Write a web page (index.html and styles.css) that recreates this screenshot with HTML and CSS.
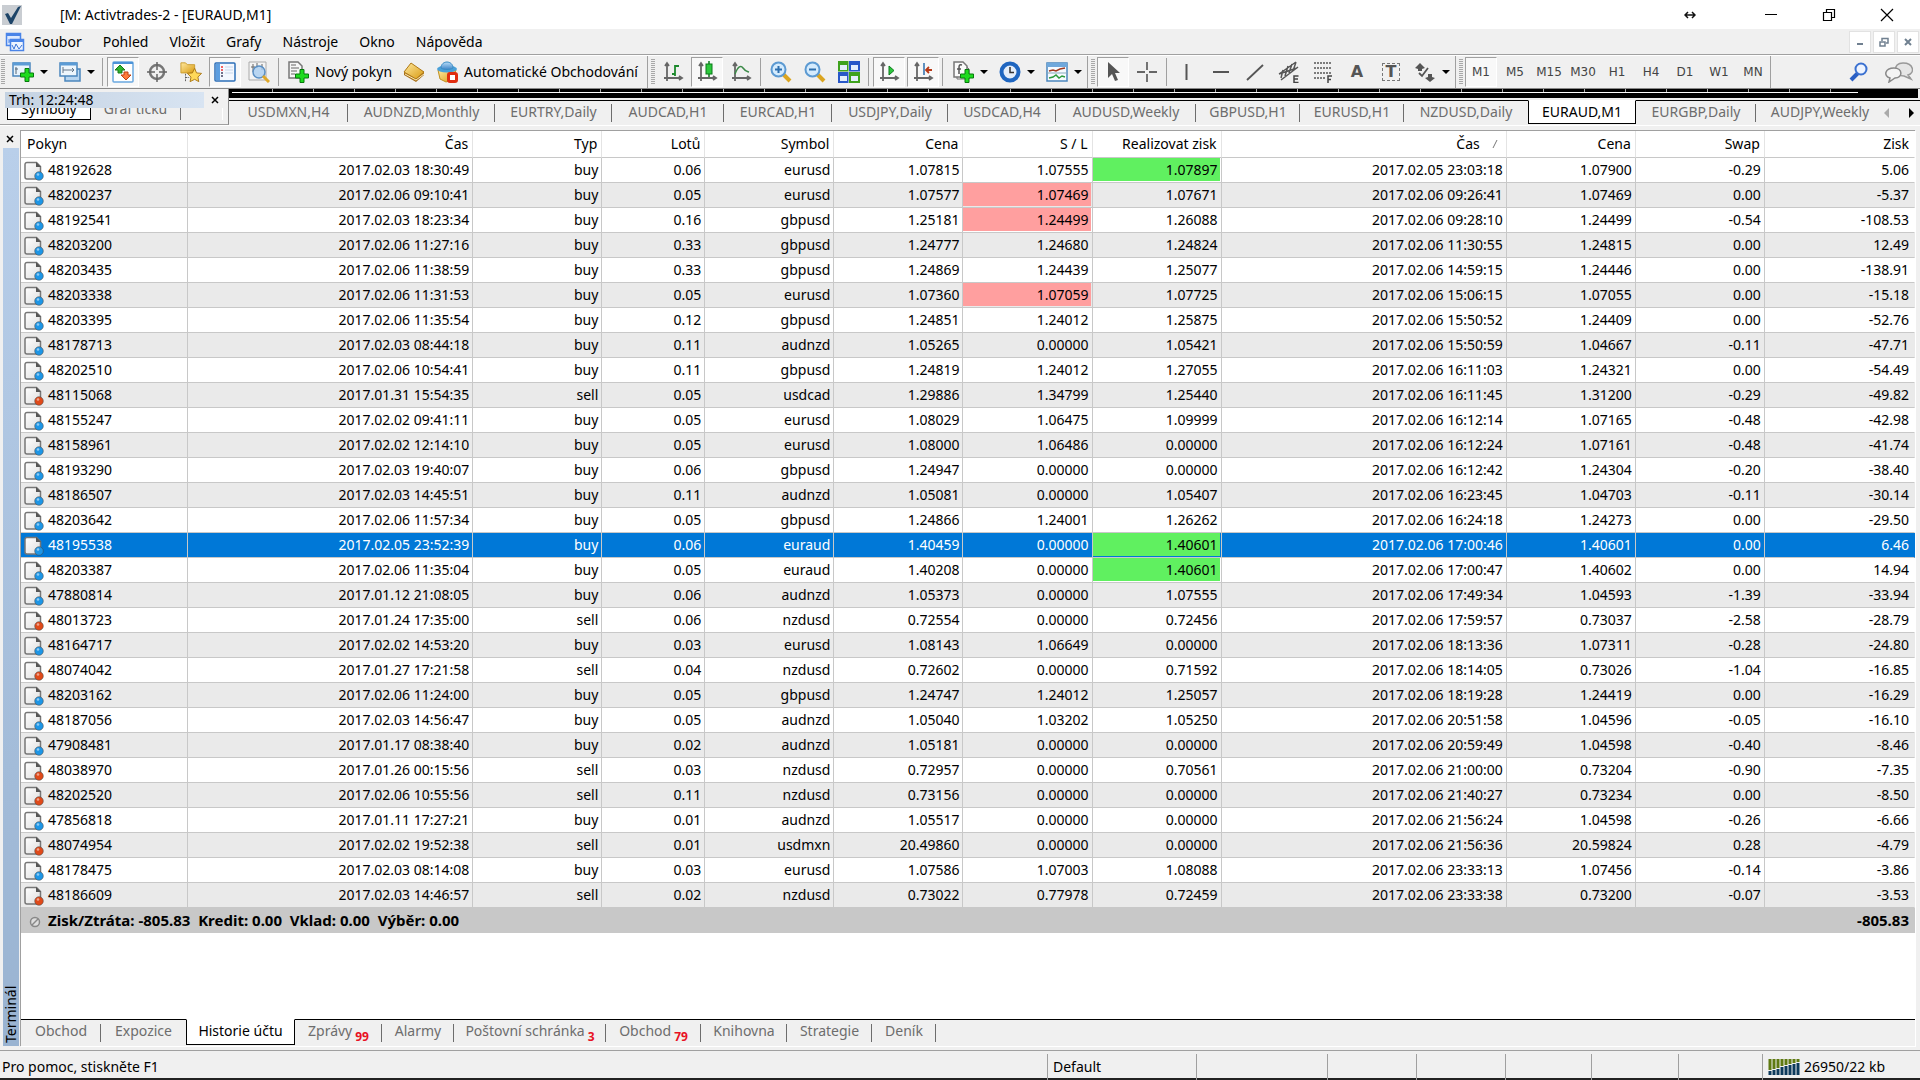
FILE: index.html
```html
<!DOCTYPE html>
<html lang="cs">
<head>
<meta charset="utf-8">
<title>Activtrades-2 - [EURAUD,M1]</title>
<link rel="stylesheet" href="styles.css">
</head>
<body>
<svg class="defs" aria-hidden="true">
  <defs>
    <linearGradient id="paper" x2="1" y2="1"><stop offset="0" stop-color="#fff"/><stop offset="1" stop-color="#ddd"/></linearGradient>
    <linearGradient id="gold" x2="1" y2="1"><stop offset="0" stop-color="#ffe9a0"/><stop offset="1" stop-color="#d89a10"/></linearGradient>
    <linearGradient id="sky" x2="0" y2="1"><stop offset="0" stop-color="#b8dcf8"/><stop offset="1" stop-color="#3f86c8"/></linearGradient>
    <symbol id="doc" viewBox="0 0 20 20">
      <path d="M3 1.500h9.500l4 4V17a1 1 0 0 1-1 1H3a2 2 0 0 1-2-2V3.500a2 2 0 0 1 2-2z" fill="url(#paper)" stroke="#777" stroke-width="1.500"/>
      <path d="M12 1v5h5z" fill="#555"/>
      <circle cx="15" cy="15" r="4.300" fill="currentColor" stroke="#444" stroke-opacity=".5"/>
      <circle cx="14" cy="13.500" r="1.300" fill="#fff" opacity=".5"/>
    </symbol>
    <symbol id="plus" viewBox="0 0 14 14"><path d="M5 .5h4V5h4.500v4H9v4.500H5V9H.5V5H5z" fill="#1edb1e" stroke="#067a0c"/></symbol>
    <symbol id="axes" viewBox="0 0 22 22"><path d="M5 3v17M2 17h17M3 5l2-3 2 3M17 15l3 2-3 2" fill="none" stroke="#666" stroke-width="1.800"/></symbol>
  </defs>
</svg>

<header class="titlebar">
  <svg class="app-icon" viewBox="0 0 20 20"><rect width="20" height="20" fill="#c9cdd2"/><path d="M3 9l3-1 3 5 7-11 3-1-9 18H8z" fill="#1d4468"/></svg>
  <h1 class="title">[M: Activtrades-2 - [EURAUD,M1]</h1>
  <svg class="resize-mark" viewBox="0 0 12 8"><path d="M2 4h8M4 1L1 4l3 3M8 1l3 3-3 3" fill="none" stroke="#111" stroke-width="1.500"/></svg>
  <button class="win-btn" aria-label="Minimalizovat"><svg viewBox="0 0 14 14"><path d="M1 6.500h12" stroke="#000"/></svg></button>
  <button class="win-btn" aria-label="Obnovit"><svg viewBox="0 0 14 14"><path d="M1.500 4.500h8v8h-8zM4.500 4V1.500h8v8H10" fill="none" stroke="#000" stroke-width="1.200"/></svg></button>
  <button class="win-btn" aria-label="Zavřít"><svg viewBox="0 0 14 14"><path d="M1 1l12 12M13 1L1 13" stroke="#000" stroke-width="1.200"/></svg></button>
</header>

<nav class="menubar">
  <svg class="menu-icon" viewBox="0 0 20 20"><path d="M1.500 1.500h14v12h-14z" fill="#dce9ff" stroke="#4a84e8" stroke-width="1.500"/><path d="M4 7v4M4 9h3" stroke="#4a84e8"/><path d="M5.500 7.500h13v11h-13z" fill="#eef4ff" stroke="#4a84e8" stroke-width="1.500"/><path d="M1 3h15M5 9h14" stroke="#4a84e8" stroke-width="2"/><path d="M7 13l2 4 2-5 3 5 3-4" fill="none" stroke="#3b74d8"/></svg>
  <button>Soubor</button><button>Pohled</button><button>Vložit</button><button>Grafy</button><button>Nástroje</button><button>Okno</button><button>Nápověda</button>
  <div class="child-controls">
    <button aria-label="Minimalizovat graf"><svg viewBox="0 0 10 10"><path d="M2 7h6" stroke="#708090" stroke-width="2"/></svg></button>
    <button aria-label="Obnovit graf"><svg viewBox="0 0 10 10"><path d="M1 5h5v4H1zM3 4V1.500h6V6H7" fill="none" stroke="#708090" stroke-width="1.500"/></svg></button>
    <button aria-label="Zavřít graf"><svg viewBox="0 0 10 10"><path d="M2 2l6 6M8 2L2 8" stroke="#708090" stroke-width="2"/></svg></button>
  </div>
</nav>

<div class="toolbar">
  <div class="group">
    <i class="grip"></i>
    <button class="tool drop" aria-label="Nový graf"><svg viewBox="0 0 22 22"><rect x="1" y="2" width="17" height="13" fill="#e8f3fc" stroke="#4b86bd" stroke-width="1.500"/><path d="M1 3h17" stroke="#5b9bd5" stroke-width="3"/><path d="M4 6v7M3 8h3" stroke="#567"/><use href="#plus" x="8" y="7" width="14" height="14"/></svg></button>
    <button class="tool drop" aria-label="Profily"><svg viewBox="0 0 22 22"><rect x="6" y="8" width="15" height="12" fill="#b7d5f0" stroke="#4b86bd" stroke-width="1.500"/><rect x="1" y="2" width="17" height="13" fill="#eef6fc" stroke="#4b86bd" stroke-width="1.500"/><path d="M1 3h17" stroke="#5b9bd5" stroke-width="3"/><path d="M4 6v6M4 9h11M13 7l2 2-2 2" fill="none" stroke="#678"/></svg></button>
    <i class="sep"></i>
    <button class="tool on" aria-label="Tržní hlídka"><svg viewBox="0 0 22 22"><rect x="1" y="1" width="20" height="20" rx="1" fill="#fff" stroke="#6aa8e0" stroke-width="1.500"/><path d="M1 2h20" stroke="#4b93d8" stroke-width="2"/><path d="M8 4l5 5h-3v3H6V9H3z" fill="#2fb52f" stroke="#187818"/><path d="M14 19l-5-5h3v-3h4v3h3z" fill="#ff7a3a" stroke="#c04010"/></svg></button>
    <button class="tool" aria-label="Datové okno"><svg viewBox="0 0 22 22"><circle cx="11" cy="11" r="7" fill="none" stroke="#777" stroke-width="2.500"/><path d="M11 1v8M11 13v8M1 11h8M13 11h8" stroke="#666" stroke-width="1.500"/></svg></button>
    <button class="tool" aria-label="Navigátor"><svg viewBox="0 0 24 22"><path d="M1 1h5l2 2h8v9H1z" fill="url(#gold)" stroke="#c89a2b"/><path d="M6 13v8M6 17h4" stroke="#555" stroke-dasharray="2 1"/><path d="M16 7l2 5 5.500.5-4 4 1 5-4.500-2.500-5 2.500 1-5-4-4 5.500-.5z" fill="#ffd95a" stroke="#a87410"/></svg></button>
    <button class="tool on" aria-label="Terminál"><svg viewBox="0 0 22 22"><rect x="1" y="2" width="20" height="18" rx="1" fill="#f4f8ff" stroke="#2d6fb8" stroke-width="1.500"/><path d="M4 3v16" stroke="#5c9ee0" stroke-width="4"/><path d="M7 6h2M7 9h2" stroke="#e33" stroke-width="1.500"/><path d="M7 12h2M7 15h2" stroke="#446" stroke-width="1.500"/><path d="M11 6h8M11 9h8M11 12h8" stroke="#c9d8ea"/></svg></button>
    <button class="tool" aria-label="Tester strategií"><svg viewBox="0 0 22 22"><path d="M1 1h17v18H1z" fill="#f4f4f4" stroke="#aaa"/><path d="M5 3v8M9 2v5M14 3v6M3 6h4" stroke="#666"/><circle cx="11" cy="11" r="6" fill="#a9cdf0" fill-opacity=".8" stroke="#5a8fc4" stroke-width="1.500"/><path d="M15 15l6 6" stroke="#e0a828" stroke-width="3"/></svg></button>
    <i class="sep"></i>
    <button class="tool text"><svg viewBox="0 0 22 22"><path d="M2 1h9l4 4v12H2z" fill="#f6f6f6" stroke="#777" stroke-width="1.500"/><path d="M4 4h5M4 7h8M4 10h6M4 13h4" stroke="#666"/><use href="#plus" x="8" y="8" width="14" height="14"/></svg>Nový pokyn</button>
    <button class="tool" aria-label="MetaEditor"><svg viewBox="0 0 22 22"><path d="M8 3l13 8v3l-8 7L1 14v-3z" fill="#a8701a"/><path d="M8 2l13 9-8 7-12-7z" fill="url(#gold)" stroke="#b07a18"/><path d="M2 13l11 6 8-6" fill="none" stroke="#ffeeb8"/></svg></button>
    <button class="tool text"><svg viewBox="0 0 22 22"><path d="M2 9h18l-4 10-6 2-6-3z" fill="url(#gold)" stroke="#c09020"/><ellipse cx="11" cy="8" rx="10" ry="3.500" fill="#4aa0d8"/><path d="M5 7c0-8 12-8 12 0-3 2-9 2-12 0z" fill="url(#sky)" stroke="#3a8cc4"/><rect x="11" y="11" width="11" height="11" rx="3" fill="#e02d10"/><rect x="14" y="14" width="5" height="5" fill="#fff"/></svg>Automatické Obchodování</button>
  </div>
  <div class="group">
    <i class="grip"></i>
    <button class="tool" aria-label="Sloupcový graf"><svg viewBox="0 0 22 22"><use href="#axes"/><path d="M13 15V4M13 5h4M10 13h3" fill="none" stroke="#1d8a2d" stroke-width="1.800"/></svg></button>
    <button class="tool on" aria-label="Svíčkový graf"><svg viewBox="0 0 22 22"><use href="#axes"/><path d="M13 0v16" stroke="#0b7a1b" stroke-width="1.500"/><rect x="10" y="3" width="6" height="10" fill="#2cc83c" stroke="#0b7a1b"/></svg></button>
    <button class="tool" aria-label="Čárový graf"><svg viewBox="0 0 22 22"><use href="#axes"/><path d="M5 13c3-8 6-9 8-6s3 3 6 4" fill="none" stroke="#3c8a48" stroke-width="1.500"/></svg></button>
    <i class="sep"></i>
    <button class="tool" aria-label="Přiblížit"><svg viewBox="0 0 22 22"><path d="M13 13l7 7" stroke="#dba520" stroke-width="4"/><circle cx="8.500" cy="8.500" r="7" fill="#d4ebfd" stroke="#5c9ad2" stroke-width="2"/><path d="M8.500 5v7M5 8.500h7" stroke="#2d6fae" stroke-width="2"/></svg></button>
    <button class="tool" aria-label="Oddálit"><svg viewBox="0 0 22 22"><path d="M13 13l7 7" stroke="#dba520" stroke-width="4"/><circle cx="8.500" cy="8.500" r="7" fill="#d4ebfd" stroke="#5c9ad2" stroke-width="2"/><path d="M5 8.500h7" stroke="#2d6fae" stroke-width="2"/></svg></button>
    <button class="tool" aria-label="Uspořádat okna"><svg viewBox="0 0 22 22"><path d="M0 0h10.500v10.500H0zM11 11h11v11H11z" fill="#3fa21d"/><path d="M11 0h11v10.500H11zM0 11h10.500v11H0z" fill="#2857c8"/><path d="M2 4h7v5H2zM13 4h7v5h-7zM2 15h7v5H2zM13 15h7v5h-7z" fill="#e4eefc"/></svg></button>
    <i class="sep"></i>
    <button class="tool on" aria-label="Automatický posun"><svg viewBox="0 0 22 22"><use href="#axes"/><path d="M11 5l5 4.500-5 4.500z" fill="#2cc83c" stroke="#0b7a1b"/></svg></button>
    <button class="tool on" aria-label="Posun grafu"><svg viewBox="0 0 22 22"><use href="#axes"/><path d="M12 2v12" stroke="#2d6fae" stroke-width="1.500"/><path d="M14 9h6M17 6l-3 3 3 3" fill="none" stroke="#b83a18" stroke-width="1.800"/></svg></button>
    <i class="sep"></i>
    <button class="tool drop" aria-label="Indikátory"><svg viewBox="0 0 22 22"><path d="M5 4h8l4 4v10H5z" fill="#eee" stroke="#777"/><path d="M2 1h9l4 4v11H2z" fill="#fafafa" stroke="#777" stroke-width="1.500"/><path d="M10 4c-3-1-3 1-3 3v6M5 8h4" fill="none" stroke="#555" stroke-width="1.500"/><use href="#plus" x="8" y="8" width="14" height="14"/></svg></button>
    <button class="tool drop" aria-label="Období"><svg viewBox="0 0 22 22"><circle cx="11" cy="11" r="8.500" fill="#e4eefa" stroke="#1f66c0" stroke-width="4"/><path d="M11 6v5.500h4" fill="none" stroke="#333" stroke-width="1.500"/></svg></button>
    <button class="tool drop" aria-label="Šablony"><svg viewBox="0 0 22 22"><rect x="1" y="2" width="20" height="18" fill="#f6faff" stroke="#4b86bd" stroke-width="1.500"/><path d="M1 4h20" stroke="#6fa8dc" stroke-width="4"/><path d="M3 10l4-1 3 1 4-2 5-1" fill="none" stroke="#a03a20" stroke-width="1.500"/><path d="M3 17l4-1 3-2 3 3 3-2 3 1" fill="none" stroke="#2c9a3c" stroke-width="1.500"/><path d="M1 12h20" stroke="#8ab"/></svg></button>
  </div>
  <div class="group">
    <i class="grip"></i>
    <button class="tool on" aria-label="Kurzor"><svg viewBox="0 0 22 22"><path d="M6 1v16l4-4 3 7 3-1-3-7h5z" fill="#555"/></svg></button>
    <button class="tool" aria-label="Nitkový kříž"><svg viewBox="0 0 22 22"><path d="M11 1v8M11 13v8M1 11h8M13 11h8" stroke="#666" stroke-width="1.800"/></svg></button>
    <i class="sep"></i>
    <button class="tool" aria-label="Svislá čára"><svg viewBox="0 0 22 22"><path d="M10.500 3v16" stroke="#555" stroke-width="2"/></svg></button>
    <button class="tool" aria-label="Vodorovná čára"><svg viewBox="0 0 22 22"><path d="M3 11h16" stroke="#555" stroke-width="2"/></svg></button>
    <button class="tool" aria-label="Trendová čára"><svg viewBox="0 0 22 22"><path d="M3 19L19 4" stroke="#555" stroke-width="1.800"/></svg></button>
    <button class="tool" aria-label="Kanál"><svg viewBox="0 0 22 22"><path d="M1 13L18 1M3 19L20 6M5 9l-2 8M10 5L7 15M14 3l-3 9M18 1l-3 9M1 13l18-6" stroke="#555" stroke-width="1.500"/><path d="M20.500 15H16v6.500h4.500M16 18h4" fill="none" stroke="#444" stroke-width="1.500"/></svg></button>
    <button class="tool" aria-label="Fibonacci"><svg viewBox="0 0 22 22"><path d="M2 2h18M2 7h18M2 12h18M2 17h11" stroke="#555" stroke-width="1.500" stroke-dasharray="2 1"/><path d="M20 15h-4v7M16 18.500h3" fill="none" stroke="#444" stroke-width="1.500"/></svg></button>
    <button class="tool letter">A</button>
    <button class="tool letter boxed" aria-label="Textový štítek"><span>T</span></button>
    <button class="tool drop" aria-label="Šipky"><svg viewBox="0 0 22 22"><path d="M6 2l5 5-3 1v2H4V8L1 7zM16 21l-5-4 3-1v-3h4v3l3 1z" fill="#555"/><path d="M5 12l3 3 6-8" fill="none" stroke="#555" stroke-width="1.800"/></svg></button>
  </div>
  <div class="group">
    <i class="grip"></i>
    <button class="tool period on">M1</button><button class="tool period">M5</button><button class="tool period">M15</button><button class="tool period">M30</button><button class="tool period">H1</button><button class="tool period">H4</button><button class="tool period">D1</button><button class="tool period">W1</button><button class="tool period">MN</button>
  </div>
  <div class="right-tools">
    <button class="tool" aria-label="Hledat"><svg viewBox="0 0 22 22"><path d="M10 12l-7 7" stroke="#2a5fc4" stroke-width="4"/><circle cx="13" cy="8" r="5.500" fill="#eef4ff" stroke="#3a70d0" stroke-width="2"/></svg></button>
    <button class="tool" aria-label="Chat"><svg class="chat" viewBox="0 0 28 22"><path d="M18 2c11 0 12 10 5 12l3 4-7-3c-10 0-12-13-1-13z" fill="#e6e6e6" stroke="#999" stroke-width="1.500"/><path d="M9 7c9 0 9 10 1 10l-6 4 1-4C-2 15 0 7 9 7z" fill="#f4f4f4" stroke="#888" stroke-width="1.500"/></svg></button>
  </div>
</div>

<div class="workspace">
  <section class="market">
    <header class="market-head"><h2>Trh: 12:24:48</h2><button class="close" aria-label="Zavřít Trh"><svg viewBox="0 0 8 8"><path d="M1 1l6 6M7 1L1 7" stroke="#000" stroke-width="1.500"/></svg></button></header>
    <div class="market-tabs"><button class="active">Symboly</button><button>Graf ticků</button></div>
  </section>
  <div class="charts">
    <div class="chart-edge"><i class="scale"></i></div>
    <nav class="chart-tabs">
      <a href="#">USDMXN,H4</a><a href="#">AUDNZD,Monthly</a><a href="#">EURTRY,Daily</a><a href="#">AUDCAD,H1</a><a href="#">EURCAD,H1</a><a href="#">USDJPY,Daily</a><a href="#">USDCAD,H4</a><a href="#">AUDUSD,Weekly</a><a href="#">GBPUSD,H1</a><a href="#">EURUSD,H1</a><a href="#">NZDUSD,Daily</a><a href="#" class="active">EURAUD,M1</a><a href="#">EURGBP,Daily</a><a href="#">AUDJPY,Weekly</a>
      <div class="scrollers">
        <button aria-label="Vlevo"><svg viewBox="0 0 6 10"><path d="M5 0v10L0 5z" fill="#aaa"/></svg></button>
        <button aria-label="Vpravo"><svg viewBox="0 0 6 10"><path d="M1 0v10l5-5z" fill="#000"/></svg></button>
      </div>
    </nav>
  </div>
</div>

<main class="terminal">
  <aside class="rail">
    <button class="close" aria-label="Zavřít Terminál"><svg viewBox="0 0 8 8"><path d="M1 1l6 6M7 1L1 7" stroke="#000" stroke-width="1.500"/></svg></button>
    <h2 class="rail-name">Terminál</h2>
  </aside>
  <div class="pane">
    <div class="scroll">
    <table class="orders">
      <colgroup><col class="c-id"><col class="c-time"><col class="c-std"><col class="c-lots"><col class="c-std"><col class="c-std"><col class="c-std"><col class="c-std"><col class="c-time"><col class="c-std"><col class="c-std"><col class="c-profit"></colgroup>
      <thead><tr><th>Pokyn<th>Čas<th>Typ<th>Lotů<th>Symbol<th>Cena<th>S / L<th>Realizovat zisk<th class="sorted">Čas<svg viewBox="0 0 6 8"><path d="M1 8L5 0" stroke="#777"/></svg><th>Cena<th>Swap<th>Zisk</thead>
      <tbody>
      <tr><td><svg class="buy"><use href="#doc"/></svg>48192628<td>2017.02.03 18:30:49<td>buy<td>0.06<td>eurusd<td>1.07815<td>1.07555<td class="tp">1.07897<td>2017.02.05 23:03:18<td>1.07900<td>-0.29<td>5.06
      <tr><td><svg class="buy"><use href="#doc"/></svg>48200237<td>2017.02.06 09:10:41<td>buy<td>0.05<td>eurusd<td>1.07577<td class="sl">1.07469<td>1.07671<td>2017.02.06 09:26:41<td>1.07469<td>0.00<td>-5.37
      <tr><td><svg class="buy"><use href="#doc"/></svg>48192541<td>2017.02.03 18:23:34<td>buy<td>0.16<td>gbpusd<td>1.25181<td class="sl">1.24499<td>1.26088<td>2017.02.06 09:28:10<td>1.24499<td>-0.54<td>-108.53
      <tr><td><svg class="buy"><use href="#doc"/></svg>48203200<td>2017.02.06 11:27:16<td>buy<td>0.33<td>gbpusd<td>1.24777<td>1.24680<td>1.24824<td>2017.02.06 11:30:55<td>1.24815<td>0.00<td>12.49
      <tr><td><svg class="buy"><use href="#doc"/></svg>48203435<td>2017.02.06 11:38:59<td>buy<td>0.33<td>gbpusd<td>1.24869<td>1.24439<td>1.25077<td>2017.02.06 14:59:15<td>1.24446<td>0.00<td>-138.91
      <tr><td><svg class="buy"><use href="#doc"/></svg>48203338<td>2017.02.06 11:31:53<td>buy<td>0.05<td>eurusd<td>1.07360<td class="sl">1.07059<td>1.07725<td>2017.02.06 15:06:15<td>1.07055<td>0.00<td>-15.18
      <tr><td><svg class="buy"><use href="#doc"/></svg>48203395<td>2017.02.06 11:35:54<td>buy<td>0.12<td>gbpusd<td>1.24851<td>1.24012<td>1.25875<td>2017.02.06 15:50:52<td>1.24409<td>0.00<td>-52.76
      <tr><td><svg class="buy"><use href="#doc"/></svg>48178713<td>2017.02.03 08:44:18<td>buy<td>0.11<td>audnzd<td>1.05265<td>0.00000<td>1.05421<td>2017.02.06 15:50:59<td>1.04667<td>-0.11<td>-47.71
      <tr><td><svg class="buy"><use href="#doc"/></svg>48202510<td>2017.02.06 10:54:41<td>buy<td>0.11<td>gbpusd<td>1.24819<td>1.24012<td>1.27055<td>2017.02.06 16:11:03<td>1.24321<td>0.00<td>-54.49
      <tr><td><svg class="sell"><use href="#doc"/></svg>48115068<td>2017.01.31 15:54:35<td>sell<td>0.05<td>usdcad<td>1.29886<td>1.34799<td>1.25440<td>2017.02.06 16:11:45<td>1.31200<td>-0.29<td>-49.82
      <tr><td><svg class="buy"><use href="#doc"/></svg>48155247<td>2017.02.02 09:41:11<td>buy<td>0.05<td>eurusd<td>1.08029<td>1.06475<td>1.09999<td>2017.02.06 16:12:14<td>1.07165<td>-0.48<td>-42.98
      <tr><td><svg class="buy"><use href="#doc"/></svg>48158961<td>2017.02.02 12:14:10<td>buy<td>0.05<td>eurusd<td>1.08000<td>1.06486<td>0.00000<td>2017.02.06 16:12:24<td>1.07161<td>-0.48<td>-41.74
      <tr><td><svg class="buy"><use href="#doc"/></svg>48193290<td>2017.02.03 19:40:07<td>buy<td>0.06<td>gbpusd<td>1.24947<td>0.00000<td>0.00000<td>2017.02.06 16:12:42<td>1.24304<td>-0.20<td>-38.40
      <tr><td><svg class="buy"><use href="#doc"/></svg>48186507<td>2017.02.03 14:45:51<td>buy<td>0.11<td>audnzd<td>1.05081<td>0.00000<td>1.05407<td>2017.02.06 16:23:45<td>1.04703<td>-0.11<td>-30.14
      <tr><td><svg class="buy"><use href="#doc"/></svg>48203642<td>2017.02.06 11:57:34<td>buy<td>0.05<td>gbpusd<td>1.24866<td>1.24001<td>1.26262<td>2017.02.06 16:24:18<td>1.24273<td>0.00<td>-29.50
      <tr class="selected"><td><svg class="buy"><use href="#doc"/></svg>48195538<td>2017.02.05 23:52:39<td>buy<td>0.06<td>euraud<td>1.40459<td>0.00000<td class="tp">1.40601<td>2017.02.06 17:00:46<td>1.40601<td>0.00<td>6.46
      <tr><td><svg class="buy"><use href="#doc"/></svg>48203387<td>2017.02.06 11:35:04<td>buy<td>0.05<td>euraud<td>1.40208<td>0.00000<td class="tp">1.40601<td>2017.02.06 17:00:47<td>1.40602<td>0.00<td>14.94
      <tr><td><svg class="buy"><use href="#doc"/></svg>47880814<td>2017.01.12 21:08:05<td>buy<td>0.06<td>audnzd<td>1.05373<td>0.00000<td>1.07555<td>2017.02.06 17:49:34<td>1.04593<td>-1.39<td>-33.94
      <tr><td><svg class="sell"><use href="#doc"/></svg>48013723<td>2017.01.24 17:35:00<td>sell<td>0.06<td>nzdusd<td>0.72554<td>0.00000<td>0.72456<td>2017.02.06 17:59:57<td>0.73037<td>-2.58<td>-28.79
      <tr><td><svg class="buy"><use href="#doc"/></svg>48164717<td>2017.02.02 14:53:20<td>buy<td>0.03<td>eurusd<td>1.08143<td>1.06649<td>0.00000<td>2017.02.06 18:13:36<td>1.07311<td>-0.28<td>-24.80
      <tr><td><svg class="sell"><use href="#doc"/></svg>48074042<td>2017.01.27 17:21:58<td>sell<td>0.04<td>nzdusd<td>0.72602<td>0.00000<td>0.71592<td>2017.02.06 18:14:05<td>0.73026<td>-1.04<td>-16.85
      <tr><td><svg class="buy"><use href="#doc"/></svg>48203162<td>2017.02.06 11:24:00<td>buy<td>0.05<td>gbpusd<td>1.24747<td>1.24012<td>1.25057<td>2017.02.06 18:19:28<td>1.24419<td>0.00<td>-16.29
      <tr><td><svg class="buy"><use href="#doc"/></svg>48187056<td>2017.02.03 14:56:47<td>buy<td>0.05<td>audnzd<td>1.05040<td>1.03202<td>1.05250<td>2017.02.06 20:51:58<td>1.04596<td>-0.05<td>-16.10
      <tr><td><svg class="buy"><use href="#doc"/></svg>47908481<td>2017.01.17 08:38:40<td>buy<td>0.02<td>audnzd<td>1.05181<td>0.00000<td>0.00000<td>2017.02.06 20:59:49<td>1.04598<td>-0.40<td>-8.46
      <tr><td><svg class="sell"><use href="#doc"/></svg>48038970<td>2017.01.26 00:15:56<td>sell<td>0.03<td>nzdusd<td>0.72957<td>0.00000<td>0.70561<td>2017.02.06 21:00:00<td>0.73204<td>-0.90<td>-7.35
      <tr><td><svg class="sell"><use href="#doc"/></svg>48202520<td>2017.02.06 10:55:56<td>sell<td>0.11<td>nzdusd<td>0.73156<td>0.00000<td>0.00000<td>2017.02.06 21:40:27<td>0.73234<td>0.00<td>-8.50
      <tr><td><svg class="buy"><use href="#doc"/></svg>47856818<td>2017.01.11 17:27:21<td>buy<td>0.01<td>audnzd<td>1.05517<td>0.00000<td>0.00000<td>2017.02.06 21:56:24<td>1.04598<td>-0.26<td>-6.66
      <tr><td><svg class="sell"><use href="#doc"/></svg>48074954<td>2017.02.02 19:52:38<td>sell<td>0.01<td>usdmxn<td>20.49860<td>0.00000<td>0.00000<td>2017.02.06 21:56:36<td>20.59824<td>0.28<td>-4.79
      <tr><td><svg class="buy"><use href="#doc"/></svg>48178475<td>2017.02.03 08:14:08<td>buy<td>0.03<td>eurusd<td>1.07586<td>1.07003<td>1.08088<td>2017.02.06 23:33:13<td>1.07456<td>-0.14<td>-3.86
      <tr><td><svg class="sell"><use href="#doc"/></svg>48186609<td>2017.02.03 14:46:57<td>sell<td>0.02<td>nzdusd<td>0.73022<td>0.77978<td>0.72459<td>2017.02.06 23:33:38<td>0.73200<td>-0.07<td>-3.53
      </tbody>
      <tfoot><tr><td colspan="11"><svg viewBox="0 0 20 20"><circle cx="11" cy="10" r="4.500" fill="#ddd" stroke="#888" stroke-width="1.500"/><path d="M8 13l6-6" stroke="#888" stroke-width="1.500"/></svg>Zisk/Ztráta: -805.83&nbsp; Kredit: 0.00&nbsp; Vklad: 0.00&nbsp; Výběr: 0.00<td>-805.83</tfoot>
    </table>
    </div>
    <nav class="pane-tabs">
      <a href="#">Obchod</a><a href="#">Expozice</a><a href="#" class="active">Historie účtu</a><a href="#">Zprávy<sub>99</sub></a><a href="#">Alarmy</a><a href="#">Poštovní schránka<sub>3</sub></a><a href="#">Obchod<sub>79</sub></a><a href="#">Knihovna</a><a href="#">Strategie</a><a href="#">Deník</a><span class="rest"></span>
    </nav>
  </div>
</main>

<footer class="status">
  <span class="hint">Pro pomoc, stiskněte F1</span><span>Default</span><span></span><span></span><span></span><span></span><span></span><span></span>
  <span class="net"><svg viewBox="0 0 32 16"><path d="M2 0v11M6 0v10M10 0v9M14 0v7M18 0v6M22 0v5M26 0v4M30 0v3" stroke="#5f7a12" stroke-width="3"/><path d="M2 16v-4M6 16v-5M10 16v-6M14 16V8M18 16V7M22 16V6M26 16V5M30 16V4" stroke="#0d3a5c" stroke-width="3"/></svg>26950/22 kb</span>
</footer>
</body>
</html>
```
FILE: styles.css
```css
* { box-sizing: border-box; }
body {
  margin: 0;
  min-height: 100vh;
  display: flex;
  flex-direction: column;
  background: #f0f0f0;
  color: #000;
  font: 14px/20px "Noto Sans", "Open Sans", sans-serif;
  overflow-x: hidden;
}
button { font: inherit; color: inherit; background: none; border: 0; padding: 0; margin: 0; }
a { color: inherit; text-decoration: none; }
h1, h2 { margin: 0; font-size: 14px; font-weight: 400; }
svg { display: block; flex: none; }
.defs { width: 0; height: 0; }

/* title bar and menu */
.titlebar { display: flex; align-items: center; height: 29px; background: #fff; padding: 0 4px 0 2px; }
.app-icon { width: 20px; height: 20px; }
.title { flex: 1; padding-left: 38px; }
.resize-mark { width: 12px; height: 8px; margin-right: 46px; }
.win-btn { width: 58px; height: 29px; display: grid; place-items: center; }
.win-btn svg { width: 14px; height: 14px; }
.menubar {
  display: flex; align-items: center; gap: 21px;
  height: 27px; padding-left: 5px;
  border-bottom: 1px solid #fff; box-shadow: inset 0 -1px #a0a0a0;
}
.menu-icon { width: 20px; height: 20px; margin-right: -12px; }
.child-controls { display: flex; gap: 2px; margin-left: auto; padding-right: 1px; }
.child-controls button { width: 22px; height: 22px; display: grid; place-items: center; background: #fff; border: 1px solid #e2e2e2; }
.child-controls svg { width: 10px; height: 10px; }

/* toolbar */
.toolbar { display: flex; height: 33px; border-bottom: 1px solid #888; }
.group { display: flex; align-items: center; gap: 2px; border-right: 1px solid #a0a0a0; padding: 0 1px 0 3px; }
.group:first-child { padding: 0 5px 0 1px; }
.grip { width: 4px; height: 26px; background: repeating-linear-gradient(#a8a8a8 0 1px, #f0f0f0 1px 2px); }
.sep { width: 4px; height: 28px; background: linear-gradient(90deg, transparent 1px, #a0a0a0 1px 2px, transparent 2px); }
.tool { width: 32px; height: 30px; display: flex; align-items: center; justify-content: center; }
.tool svg { width: 22px; height: 22px; }
.tool.on { background: #f8f8f8; border: 1px solid; border-color: #a0a0a0 #fff #fff #a0a0a0; }
.tool.drop { width: 45px; justify-content: flex-start; padding-left: 5px; gap: 6px; }
.tool.drop::after { content: ""; border: 4px solid transparent; border-top-color: #000; border-bottom: 0; }
.tool.text { width: auto; padding: 0 4px; gap: 6px; }
.letter { font: bold 16px/20px "DejaVu Sans", sans-serif; color: #555; }
.boxed span { width: 18px; height: 18px; line-height: 16px; border: 1px dashed #777; }
.period { font: 12px/16px "DejaVu Sans", sans-serif; color: #444; }
.right-tools { display: flex; align-items: center; gap: 8px; margin-left: auto; padding-right: 5px; }
.tool .chat { width: 28px; }

/* market watch and chart tabs */
.workspace { display: flex; height: 37px; border-bottom: 1px solid #fff; }
.market { width: 229px; padding: 3px 0 0 5px; border-right: 1px solid #888; border-bottom: 1px solid #a0a0a0; }
.market-head { display: flex; align-items: center; height: 16px; }
.market h2 { width: 199px; line-height: 16px; padding-left: 4px; background: linear-gradient(90deg, #c4d2e2, #d8e4f2); }
.close { display: grid; place-items: center; }
.close svg { width: 8px; height: 8px; }
.market-head .close { width: 21px; height: 16px; }
.market-tabs { display: flex; align-items: flex-end; height: 12px; margin: 0 5px 0 2px; overflow: hidden; color: #6d6d6d; border-right: 1px solid #fff; }
.market-tabs button { height: 22px; line-height: 16px; padding: 0 13px; border-right: 1px solid #6d6d6d; }
.market-tabs .active { color: #000; background: #fff; border: 1px solid #000; }
.charts { flex: 1; min-width: 0; }
.chart-edge { height: 9px; background: #000; margin-right: 2px; padding-left: 3px; }
.scale { display: block; height: 4px; margin-right: 60px; border-bottom: 1px solid #fff; background: repeating-linear-gradient(90deg, transparent 0 40px, #aaa 40px 41px); }
.chart-tabs {
  display: grid; margin-top: 2px; height: 24px; overflow: hidden;
  grid-template-columns: 119px 147px 117px 112px 108px 116px 108px 140px 104px 104px 124px 108px 120px 128px 1fr;
  color: #6d6d6d; white-space: nowrap;
}
.chart-tabs > * { border-top: 1px solid #000; }
.chart-tabs a, .pane-tabs a { display: flex; justify-content: center; line-height: 22px; background: linear-gradient(#6d6d6d, #6d6d6d) right center / 1px 18px no-repeat; }
.chart-tabs a:nth-child(11), .chart-tabs a:nth-child(14), .pane-tabs a:nth-child(2) { background: none; }
.chart-tabs .active, .pane-tabs .active { color: #000; background: #fff; border: 1px solid #000; border-top-color: #fff; }
.scrollers { display: flex; justify-content: flex-end; align-items: center; gap: 18px; padding-right: 12px; }
.scrollers svg { width: 6px; height: 10px; }

/* terminal */
.terminal { flex: 1; display: flex; padding: 4px 5px 0 3px; }
.rail { width: 17px; display: flex; flex-direction: column; }
.rail .close { width: 14px; height: 18px; }
.rail-name {
  flex: 1; width: 16px; writing-mode: vertical-rl; transform: rotate(180deg);
  padding-top: 3px; line-height: 16px; background: linear-gradient(#99b3d1, #b9cfea);
}
.pane { flex: 1; min-width: 0; display: flex; flex-direction: column; border: 1px solid #a0a0a0; border-width: 1px 0 0 1px; box-shadow: 1px 1px #fff; }
.scroll { flex: 1; background: #fff; }
.orders { width: 100%; table-layout: fixed; border-collapse: separate; border-spacing: 0; }
.c-id { width: 167px; } .c-time { width: 285px; } .c-std { width: 129px; } .c-lots { width: 103px; } .c-profit { width: 150px; }
.orders th, .orders td { height: 25px; padding: 0 3px 0 6px; text-align: right; font-weight: 400; line-height: 22px; border: 1px solid #c8c8c8; border-width: 0 1px 1px 0; white-space: nowrap; }
.orders th { height: 27px; padding-right: 4px; border-right-color: #e4e4e4; }
.orders th:first-child { text-align: left; }
.orders td:first-child { text-align: left; padding-left: 3px; }
.orders th:last-child, .orders td:last-child { padding-right: 5px; border-right-color: transparent; }
.orders td svg { display: inline-block; width: 20px; height: 20px; margin-right: 4px; vertical-align: -6px; }
.orders .buy { color: #1e96e6; }
.orders .sell { color: #e04a1a; }
.sorted svg { display: inline-block; width: 6px; height: 8px; margin: 0 4px 0 12px; vertical-align: 1px; }
.orders tbody tr { --row: #fff; background: var(--row); }
.orders tbody tr:nth-child(even) { --row: #eaeaea; }
.orders tbody tr.selected { --row: #0078d7; color: #fff; }
.orders tbody .sl, .orders tbody .tp { color: #000; box-shadow: inset -1px -1px var(--row); }
.orders tbody .sl { background: #ff9f9f; }
.orders tbody .tp { background: #60f060; }
.orders tfoot tr { background: #c8c8c8; }
.orders tfoot td { border-color: #c8c8c8; font-size: 15px; font-weight: 700; }
.pane-tabs { display: grid; height: 27px; grid-template-columns: 80px 85px 109px 87px 72px 152px 95px 86px 85px 64px 1fr; color: #6d6d6d; white-space: nowrap; }
.pane-tabs > * { border-top: 1px solid #000; height: 26px; }
.pane-tabs sub { font-size: 12px; line-height: 16px; font-weight: 700; color: #e81123; align-self: flex-end; margin-left: 3px; }

/* status bar */
.status { display: grid; grid-template-columns: 1fr 149px 131px 89px 89px 86px 87px 84px 158px; height: 34px; padding-top: 8px; border-bottom: 2px solid #222; background: linear-gradient(#a0a0a0, #a0a0a0) 0 4px / 100% 1px no-repeat; }
.status span { border-left: 1px solid #a0a0a0; padding-left: 5px; line-height: 26px; white-space: nowrap; }
.status .hint { border-left: 0; padding-left: 2px; }
.status .net { display: flex; align-items: center; gap: 4px; }
.net svg { width: 32px; height: 16px; }
```
